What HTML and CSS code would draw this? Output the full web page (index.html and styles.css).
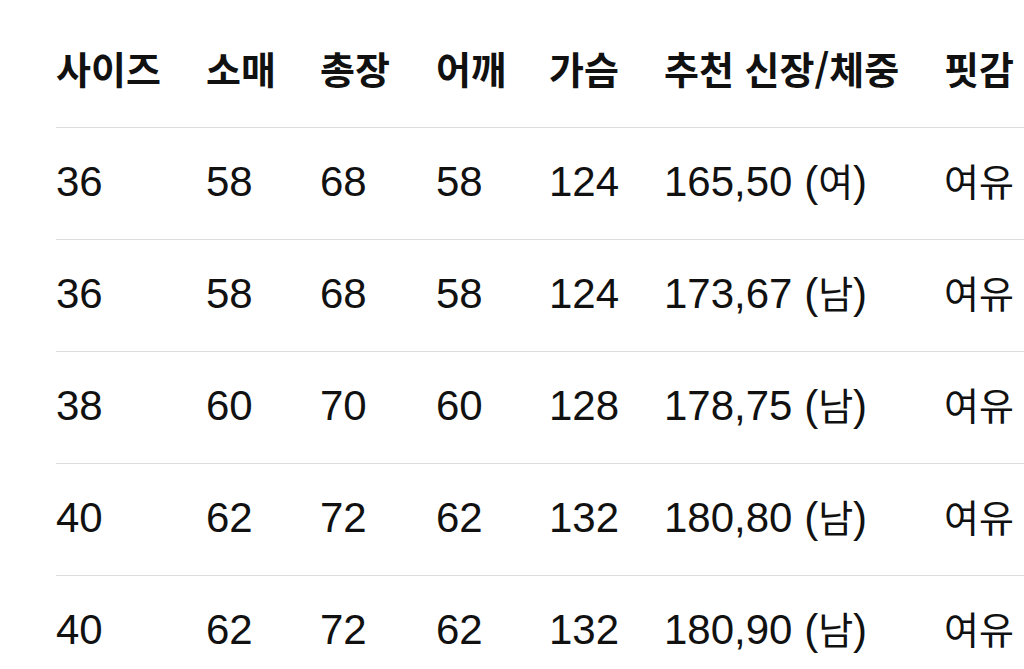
FILE: index.html
```html
<!DOCTYPE html>
<html lang="ko">
<head>
<meta charset="utf-8">
<link rel="stylesheet" href="styles.css">
</head>
<body>
<div class="table">
  <div class="row head">
    <div>사이즈</div><div>소매</div><div>총장</div><div>어깨</div><div>가슴</div><div>추천 신장/체중</div><div>핏감</div>
  </div>
  <div class="row">
    <div>36</div><div>58</div><div>68</div><div>58</div><div>124</div><div>165,50 (<span class="ko">여</span>)</div><div class="ko">여유</div>
  </div>
  <div class="row">
    <div>36</div><div>58</div><div>68</div><div>58</div><div>124</div><div>173,67 (<span class="ko">남</span>)</div><div class="ko">여유</div>
  </div>
  <div class="row">
    <div>38</div><div>60</div><div>70</div><div>60</div><div>128</div><div>178,75 (<span class="ko">남</span>)</div><div class="ko">여유</div>
  </div>
  <div class="row">
    <div>40</div><div>62</div><div>72</div><div>62</div><div>132</div><div>180,80 (<span class="ko">남</span>)</div><div class="ko">여유</div>
  </div>
  <div class="row">
    <div>40</div><div>62</div><div>72</div><div>62</div><div>132</div><div>180,90 (<span class="ko">남</span>)</div><div class="ko">여유</div>
  </div>
</div>
</body>
</html>
```

FILE: styles.css
```css
html, body {
  margin: 0;
  padding: 0;
  background: #ffffff;
  overflow: hidden;
}
body {
  font-family: "Liberation Sans", "Noto Sans CJK KR", sans-serif;
  color: #111111;
}
.table {
  padding-left: 56px;
  padding-top: 16px;
}
.row {
  display: grid;
  grid-template-columns: 150px 114px 116px 113px 115px 280px 1fr;
  align-items: baseline;
  box-sizing: border-box;
  height: 112px;
  padding-top: 33px;
  border-bottom: 1px solid #dcdcdc;
  font-size: 42px;
  line-height: 1;
  white-space: nowrap;
}
.ko {
  font-size: 38px;
}
.row .ko {
  font-size: 38px;
}
.head {
  font-family: "Noto Sans CJK KR", "Liberation Sans", sans-serif;
  font-weight: 700;
  font-size: 38px;
}
```
